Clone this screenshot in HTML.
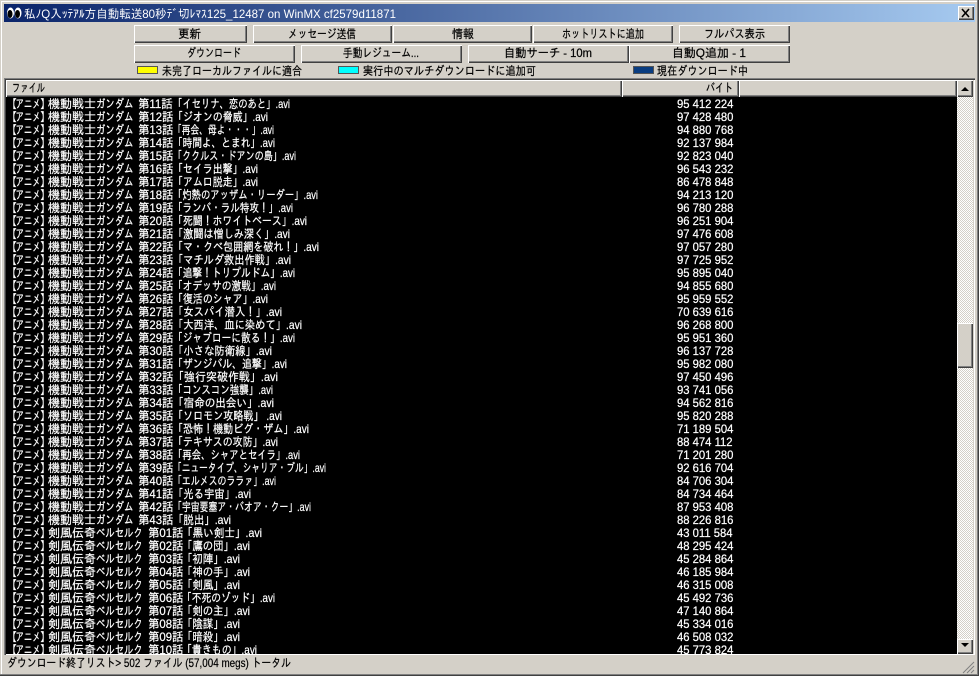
<!DOCTYPE html>
<html><head><meta charset="utf-8"><style>
html,body{margin:0;padding:0}
body{width:979px;height:676px;overflow:hidden;background:#d4d0c8;position:relative;font:12px "Liberation Sans","IPAGothic",sans-serif;color:#000}
div{position:absolute;box-sizing:border-box}
.b{background:#d4d0c8;box-shadow:inset 1px 1px 0 #fff,inset -1px -1px 0 #404040,inset -2px -2px 0 #808080}
.l{width:21px;height:8px;border:1px solid #555;top:66px}
.c{background-image:conic-gradient(#fff 25%,#d4d0c8 0 50%,#fff 0 75%,#d4d0c8 0);background-size:2px 2px}
svg{position:absolute;left:0;top:0}
svg text{font-family:"Liberation Sans","IPAGothic","Noto Sans CJK JP",sans-serif;font-size:12px;fill:#fff;stroke:#fff;stroke-width:.22;white-space:pre}
svg text.d{fill:#000;stroke:#000}
svg text.w{stroke-width:0}
.a{transform:translate(5px,0)}
.e{transform:translate(15.5px,0) scaleX(.7)}
.f{transform:translate(40px,0)}
.k{transform:translate(48px,0)}
.g{transform:translate(96px,0) scaleX(.78)}
.n{transform:translate(138px,0) scaleX(.95)}
.m{transform:translate(148px,0) scaleX(.95)}
.s{transform:translate(677px,0) scaleX(.94)}
</style></head><body>
<div style="left:0;top:0;width:979px;height:676px;box-shadow:inset -1px -1px 0 #404040,inset -2px -2px 0 #808080,inset 1px 1px 0 #d4d0c8,inset 2px 2px 0 #fff"></div>
<div style="left:4px;top:4px;width:971px;height:18px;background:linear-gradient(90deg,#0a246a,#a6caf0)"></div>
<div class="b" style="left:958px;top:6px;width:16px;height:14px"></div>

<div class="b" style="left:134px;top:25px;width:113px;height:18px"></div>
<div class="b" style="left:253px;top:25px;width:139px;height:18px"></div>
<div class="b" style="left:393px;top:25px;width:139px;height:18px"></div>
<div class="b" style="left:533px;top:25px;width:140px;height:18px"></div>
<div class="b" style="left:679px;top:25px;width:111px;height:18px"></div>
<div class="b" style="left:134px;top:45px;width:161px;height:18px"></div>
<div class="b" style="left:301px;top:45px;width:161px;height:18px"></div>
<div class="b" style="left:468px;top:45px;width:161px;height:18px"></div>
<div class="b" style="left:629px;top:45px;width:161px;height:18px"></div>

<div class="l" style="left:137px;background:#ffff00"></div>
<div class="l" style="left:338px;background:#00ffff"></div>
<div class="l" style="left:633px;background:#0a3d80"></div>

<div style="left:4px;top:78px;width:971px;height:577px;box-shadow:inset 1px 1px 0 #808080,inset 2px 2px 0 #404040,inset -1px -1px 0 #fff"></div>
<div class="b" style="left:6px;top:80px;width:616px;height:17px"></div>
<div class="b" style="left:622px;top:80px;width:117px;height:17px"></div>
<div class="b" style="left:739px;top:80px;width:218px;height:17px"></div>
<div style="left:6px;top:97px;width:951px;height:557px;background:#000"></div>
<div class="c" style="left:957px;top:97px;width:16px;height:557px"></div>
<div class="b" style="left:957px;top:80px;width:16px;height:17px"></div>
<div class="b" style="left:957px;top:323px;width:16px;height:45px"></div>
<div class="b" style="left:957px;top:639px;width:16px;height:15px"></div>

<svg width="979" height="676" viewBox="0 0 979 676">
<ellipse cx="10.5" cy="13" rx="3.5" ry="5.5" fill="#fff"/><ellipse cx="10" cy="14" rx="2.5" ry="4" fill="#000"/>
<ellipse cx="18" cy="13" rx="3.5" ry="5.5" fill="#fff"/><ellipse cx="17.5" cy="14" rx="2.5" ry="4" fill="#000"/>
<path d="M962 9l7 8M969 9l-7 8" stroke="#000" stroke-width="1.6" fill="none"/>
<path d="M961 91h8l-4-4z M961 643h8l-4 4z" fill="#000"/>
<path d="M963 673l11-11M967 673l7-7M971 673l3-3" stroke="#808080" stroke-width="1" fill="none"/>
<text class="w" x="24" y="18" textLength="372" lengthAdjust="spacingAndGlyphs">私ﾉQ入ｯﾃｱﾙ方自動転送80秒ﾃﾞ切ﾚﾏｽ125_12487 on WinMX cf2579d11871</text>
<text class="d" x="178" y="38" textLength="23" lengthAdjust="spacingAndGlyphs">更新</text>
<text class="d" x="288" y="38" textLength="68" lengthAdjust="spacingAndGlyphs">メッセージ送信</text>
<text class="d" x="452" y="38" textLength="22" lengthAdjust="spacingAndGlyphs">情報</text>
<text class="d" x="562" y="38" textLength="82" lengthAdjust="spacingAndGlyphs">ホットリストに追加</text>
<text class="d" x="704" y="38" textLength="61" lengthAdjust="spacingAndGlyphs">フルパス表示</text>
<text class="d" x="187" y="57" textLength="54" lengthAdjust="spacingAndGlyphs">ダウンロード</text>
<text class="d" x="343" y="57" textLength="76" lengthAdjust="spacingAndGlyphs">手動レジューム...</text>
<text class="d" x="504" y="57" textLength="88" lengthAdjust="spacingAndGlyphs">自動サーチ - 10m</text>
<text class="d" x="672" y="57" textLength="74" lengthAdjust="spacingAndGlyphs">自動Q追加 - 1</text>
<text class="d" x="162" y="75" textLength="140" lengthAdjust="spacingAndGlyphs">未完了ローカルファイルに適合</text>
<text class="d" x="363" y="75" textLength="173" lengthAdjust="spacingAndGlyphs">実行中のマルチダウンロードに追加可</text>
<text class="d" x="657" y="75" textLength="91" lengthAdjust="spacingAndGlyphs">現在ダウンロード中</text>
<text class="d" x="12" y="92" textLength="33" lengthAdjust="spacingAndGlyphs">ファイル</text>
<text class="d" x="706" y="92" textLength="27" lengthAdjust="spacingAndGlyphs">バイト</text>
<text class="d" x="7" y="667" textLength="284" lengthAdjust="spacingAndGlyphs">ダウンロード終了リスト&gt; 502 ファイル (57,004 megs) トータル</text>
</svg>

<svg width="979" height="654" viewBox="0 0 979 654">
<text class="a" y="108">【</text><text class="e" y="108">アニメ</text><text class="f" y="108">】</text><text class="k" y="108">機動戦士</text><text class="g" y="108">ガンダム</text><text class="n" y="108">第11話</text><text x="173" y="108" textLength="117" lengthAdjust="spacingAndGlyphs">「イセリナ、恋のあと」.avi</text><text class="s" y="108">95 412 224</text>
<text class="a" y="121">【</text><text class="e" y="121">アニメ</text><text class="f" y="121">】</text><text class="k" y="121">機動戦士</text><text class="g" y="121">ガンダム</text><text class="n" y="121">第12話</text><text x="173" y="121" textLength="95" lengthAdjust="spacingAndGlyphs">「ジオンの脅威」.avi</text><text class="s" y="121">97 428 480</text>
<text class="a" y="134">【</text><text class="e" y="134">アニメ</text><text class="f" y="134">】</text><text class="k" y="134">機動戦士</text><text class="g" y="134">ガンダム</text><text class="n" y="134">第13話</text><text x="173" y="134" textLength="101" lengthAdjust="spacingAndGlyphs">「再会、母よ・・・」.avi</text><text class="s" y="134">94 880 768</text>
<text class="a" y="147">【</text><text class="e" y="147">アニメ</text><text class="f" y="147">】</text><text class="k" y="147">機動戦士</text><text class="g" y="147">ガンダム</text><text class="n" y="147">第14話</text><text x="173" y="147" textLength="102" lengthAdjust="spacingAndGlyphs">「時間よ、とまれ」.avi</text><text class="s" y="147">92 137 984</text>
<text class="a" y="160">【</text><text class="e" y="160">アニメ</text><text class="f" y="160">】</text><text class="k" y="160">機動戦士</text><text class="g" y="160">ガンダム</text><text class="n" y="160">第15話</text><text x="173" y="160" textLength="123" lengthAdjust="spacingAndGlyphs">「ククルス・ドアンの島」.avi</text><text class="s" y="160">92 823 040</text>
<text class="a" y="173">【</text><text class="e" y="173">アニメ</text><text class="f" y="173">】</text><text class="k" y="173">機動戦士</text><text class="g" y="173">ガンダム</text><text class="n" y="173">第16話</text><text x="173" y="173" textLength="85" lengthAdjust="spacingAndGlyphs">「セイラ出撃」.avi</text><text class="s" y="173">96 543 232</text>
<text class="a" y="186">【</text><text class="e" y="186">アニメ</text><text class="f" y="186">】</text><text class="k" y="186">機動戦士</text><text class="g" y="186">ガンダム</text><text class="n" y="186">第17話</text><text x="173" y="186" textLength="85" lengthAdjust="spacingAndGlyphs">「アムロ脱走」.avi</text><text class="s" y="186">86 478 848</text>
<text class="a" y="199">【</text><text class="e" y="199">アニメ</text><text class="f" y="199">】</text><text class="k" y="199">機動戦士</text><text class="g" y="199">ガンダム</text><text class="n" y="199">第18話</text><text x="173" y="199" textLength="145" lengthAdjust="spacingAndGlyphs">「灼熱のアッザム・リーダー」.avi</text><text class="s" y="199">94 213 120</text>
<text class="a" y="212">【</text><text class="e" y="212">アニメ</text><text class="f" y="212">】</text><text class="k" y="212">機動戦士</text><text class="g" y="212">ガンダム</text><text class="n" y="212">第19話</text><text x="173" y="212" textLength="120" lengthAdjust="spacingAndGlyphs">「ランバ・ラル特攻！」.avi</text><text class="s" y="212">96 780 288</text>
<text class="a" y="225">【</text><text class="e" y="225">アニメ</text><text class="f" y="225">】</text><text class="k" y="225">機動戦士</text><text class="g" y="225">ガンダム</text><text class="n" y="225">第20話</text><text x="173" y="225" textLength="134" lengthAdjust="spacingAndGlyphs">「死闘！ホワイトベース」.avi</text><text class="s" y="225">96 251 904</text>
<text class="a" y="238">【</text><text class="e" y="238">アニメ</text><text class="f" y="238">】</text><text class="k" y="238">機動戦士</text><text class="g" y="238">ガンダム</text><text class="n" y="238">第21話</text><text x="173" y="238" textLength="117" lengthAdjust="spacingAndGlyphs">「激闘は憎しみ深く」.avi</text><text class="s" y="238">97 476 608</text>
<text class="a" y="251">【</text><text class="e" y="251">アニメ</text><text class="f" y="251">】</text><text class="k" y="251">機動戦士</text><text class="g" y="251">ガンダム</text><text class="n" y="251">第22話</text><text x="173" y="251" textLength="146" lengthAdjust="spacingAndGlyphs">「マ・クベ包囲網を破れ！」.avi</text><text class="s" y="251">97 057 280</text>
<text class="a" y="264">【</text><text class="e" y="264">アニメ</text><text class="f" y="264">】</text><text class="k" y="264">機動戦士</text><text class="g" y="264">ガンダム</text><text class="n" y="264">第23話</text><text x="173" y="264" textLength="118" lengthAdjust="spacingAndGlyphs">「マチルダ救出作戦」.avi</text><text class="s" y="264">97 725 952</text>
<text class="a" y="277">【</text><text class="e" y="277">アニメ</text><text class="f" y="277">】</text><text class="k" y="277">機動戦士</text><text class="g" y="277">ガンダム</text><text class="n" y="277">第24話</text><text x="173" y="277" textLength="122" lengthAdjust="spacingAndGlyphs">「追撃！トリプルドム」.avi</text><text class="s" y="277">95 895 040</text>
<text class="a" y="290">【</text><text class="e" y="290">アニメ</text><text class="f" y="290">】</text><text class="k" y="290">機動戦士</text><text class="g" y="290">ガンダム</text><text class="n" y="290">第25話</text><text x="173" y="290" textLength="103" lengthAdjust="spacingAndGlyphs">「オデッサの激戦」.avi</text><text class="s" y="290">94 855 680</text>
<text class="a" y="303">【</text><text class="e" y="303">アニメ</text><text class="f" y="303">】</text><text class="k" y="303">機動戦士</text><text class="g" y="303">ガンダム</text><text class="n" y="303">第26話</text><text x="173" y="303" textLength="95" lengthAdjust="spacingAndGlyphs">「復活のシャア」.avi</text><text class="s" y="303">95 959 552</text>
<text class="a" y="316">【</text><text class="e" y="316">アニメ</text><text class="f" y="316">】</text><text class="k" y="316">機動戦士</text><text class="g" y="316">ガンダム</text><text class="n" y="316">第27話</text><text x="173" y="316" textLength="109" lengthAdjust="spacingAndGlyphs">「女スパイ潜入！」.avi</text><text class="s" y="316">70 639 616</text>
<text class="a" y="329">【</text><text class="e" y="329">アニメ</text><text class="f" y="329">】</text><text class="k" y="329">機動戦士</text><text class="g" y="329">ガンダム</text><text class="n" y="329">第28話</text><text x="173" y="329" textLength="129" lengthAdjust="spacingAndGlyphs">「大西洋、血に染めて」.avi</text><text class="s" y="329">96 268 800</text>
<text class="a" y="342">【</text><text class="e" y="342">アニメ</text><text class="f" y="342">】</text><text class="k" y="342">機動戦士</text><text class="g" y="342">ガンダム</text><text class="n" y="342">第29話</text><text x="173" y="342" textLength="122" lengthAdjust="spacingAndGlyphs">「ジャブローに散る！」.avi</text><text class="s" y="342">95 951 360</text>
<text class="a" y="355">【</text><text class="e" y="355">アニメ</text><text class="f" y="355">】</text><text class="k" y="355">機動戦士</text><text class="g" y="355">ガンダム</text><text class="n" y="355">第30話</text><text x="173" y="355" textLength="99" lengthAdjust="spacingAndGlyphs">「小さな防衛線」.avi</text><text class="s" y="355">96 137 728</text>
<text class="a" y="368">【</text><text class="e" y="368">アニメ</text><text class="f" y="368">】</text><text class="k" y="368">機動戦士</text><text class="g" y="368">ガンダム</text><text class="n" y="368">第31話</text><text x="173" y="368" textLength="114" lengthAdjust="spacingAndGlyphs">「ザンジバル、追撃」.avi</text><text class="s" y="368">95 982 080</text>
<text class="a" y="381">【</text><text class="e" y="381">アニメ</text><text class="f" y="381">】</text><text class="k" y="381">機動戦士</text><text class="g" y="381">ガンダム</text><text class="n" y="381">第32話</text><text x="173" y="381" textLength="105" lengthAdjust="spacingAndGlyphs">「強行突破作戦」.avi</text><text class="s" y="381">97 450 496</text>
<text class="a" y="394">【</text><text class="e" y="394">アニメ</text><text class="f" y="394">】</text><text class="k" y="394">機動戦士</text><text class="g" y="394">ガンダム</text><text class="n" y="394">第33話</text><text x="173" y="394" textLength="100" lengthAdjust="spacingAndGlyphs">「コンスコン強襲」.avi</text><text class="s" y="394">93 741 056</text>
<text class="a" y="407">【</text><text class="e" y="407">アニメ</text><text class="f" y="407">】</text><text class="k" y="407">機動戦士</text><text class="g" y="407">ガンダム</text><text class="n" y="407">第34話</text><text x="173" y="407" textLength="101" lengthAdjust="spacingAndGlyphs">「宿命の出会い」.avi</text><text class="s" y="407">94 562 816</text>
<text class="a" y="420">【</text><text class="e" y="420">アニメ</text><text class="f" y="420">】</text><text class="k" y="420">機動戦士</text><text class="g" y="420">ガンダム</text><text class="n" y="420">第35話</text><text x="173" y="420" textLength="109" lengthAdjust="spacingAndGlyphs">「ソロモン攻略戦」 .avi</text><text class="s" y="420">95 820 288</text>
<text class="a" y="433">【</text><text class="e" y="433">アニメ</text><text class="f" y="433">】</text><text class="k" y="433">機動戦士</text><text class="g" y="433">ガンダム</text><text class="n" y="433">第36話</text><text x="173" y="433" textLength="136" lengthAdjust="spacingAndGlyphs">「恐怖！機動ビグ・ザム」.avi</text><text class="s" y="433">71 189 504</text>
<text class="a" y="446">【</text><text class="e" y="446">アニメ</text><text class="f" y="446">】</text><text class="k" y="446">機動戦士</text><text class="g" y="446">ガンダム</text><text class="n" y="446">第37話</text><text x="173" y="446" textLength="105" lengthAdjust="spacingAndGlyphs">「テキサスの攻防」.avi</text><text class="s" y="446">88 474 112</text>
<text class="a" y="459">【</text><text class="e" y="459">アニメ</text><text class="f" y="459">】</text><text class="k" y="459">機動戦士</text><text class="g" y="459">ガンダム</text><text class="n" y="459">第38話</text><text x="173" y="459" textLength="127" lengthAdjust="spacingAndGlyphs">「再会、シャアとセイラ」.avi</text><text class="s" y="459">71 201 280</text>
<text class="a" y="472">【</text><text class="e" y="472">アニメ</text><text class="f" y="472">】</text><text class="k" y="472">機動戦士</text><text class="g" y="472">ガンダム</text><text class="n" y="472">第39話</text><text x="173" y="472" textLength="153" lengthAdjust="spacingAndGlyphs">「ニュータイプ、シャリア・ブル」.avi</text><text class="s" y="472">92 616 704</text>
<text class="a" y="485">【</text><text class="e" y="485">アニメ</text><text class="f" y="485">】</text><text class="k" y="485">機動戦士</text><text class="g" y="485">ガンダム</text><text class="n" y="485">第40話</text><text x="173" y="485" textLength="103" lengthAdjust="spacingAndGlyphs">「エルメスのララァ」.avi</text><text class="s" y="485">84 706 304</text>
<text class="a" y="498">【</text><text class="e" y="498">アニメ</text><text class="f" y="498">】</text><text class="k" y="498">機動戦士</text><text class="g" y="498">ガンダム</text><text class="n" y="498">第41話</text><text x="173" y="498" textLength="78" lengthAdjust="spacingAndGlyphs">「光る宇宙」.avi</text><text class="s" y="498">84 734 464</text>
<text class="a" y="511">【</text><text class="e" y="511">アニメ</text><text class="f" y="511">】</text><text class="k" y="511">機動戦士</text><text class="g" y="511">ガンダム</text><text class="n" y="511">第42話</text><text x="173" y="511" textLength="138" lengthAdjust="spacingAndGlyphs">「宇宙要塞ア・バオア・クー」.avi</text><text class="s" y="511">87 953 408</text>
<text class="a" y="524">【</text><text class="e" y="524">アニメ</text><text class="f" y="524">】</text><text class="k" y="524">機動戦士</text><text class="g" y="524">ガンダム</text><text class="n" y="524">第43話</text><text x="173" y="524" textLength="58" lengthAdjust="spacingAndGlyphs">「脱出」.avi</text><text class="s" y="524">88 226 816</text>
<text class="a" y="537">【</text><text class="e" y="537">アニメ</text><text class="f" y="537">】</text><text class="k" y="537">剣風伝奇</text><text class="g" y="537">ベルセルク</text><text class="m" y="537">第01話</text><text x="182" y="537" textLength="80" lengthAdjust="spacingAndGlyphs">「黒い剣士」.avi</text><text class="s" y="537">43 011 584</text>
<text class="a" y="550">【</text><text class="e" y="550">アニメ</text><text class="f" y="550">】</text><text class="k" y="550">剣風伝奇</text><text class="g" y="550">ベルセルク</text><text class="m" y="550">第02話</text><text x="182" y="550" textLength="68" lengthAdjust="spacingAndGlyphs">「鷹の団」.avi</text><text class="s" y="550">48 295 424</text>
<text class="a" y="563">【</text><text class="e" y="563">アニメ</text><text class="f" y="563">】</text><text class="k" y="563">剣風伝奇</text><text class="g" y="563">ベルセルク</text><text class="m" y="563">第03話</text><text x="182" y="563" textLength="58" lengthAdjust="spacingAndGlyphs">「初陣」.avi</text><text class="s" y="563">45 284 864</text>
<text class="a" y="576">【</text><text class="e" y="576">アニメ</text><text class="f" y="576">】</text><text class="k" y="576">剣風伝奇</text><text class="g" y="576">ベルセルク</text><text class="m" y="576">第04話</text><text x="182" y="576" textLength="68" lengthAdjust="spacingAndGlyphs">「神の手」.avi</text><text class="s" y="576">46 185 984</text>
<text class="a" y="589">【</text><text class="e" y="589">アニメ</text><text class="f" y="589">】</text><text class="k" y="589">剣風伝奇</text><text class="g" y="589">ベルセルク</text><text class="m" y="589">第05話</text><text x="182" y="589" textLength="58" lengthAdjust="spacingAndGlyphs">「剣風」.avi</text><text class="s" y="589">46 315 008</text>
<text class="a" y="602">【</text><text class="e" y="602">アニメ</text><text class="f" y="602">】</text><text class="k" y="602">剣風伝奇</text><text class="g" y="602">ベルセルク</text><text class="m" y="602">第06話</text><text x="182" y="602" textLength="93" lengthAdjust="spacingAndGlyphs">「不死のゾッド」.avi</text><text class="s" y="602">45 492 736</text>
<text class="a" y="615">【</text><text class="e" y="615">アニメ</text><text class="f" y="615">】</text><text class="k" y="615">剣風伝奇</text><text class="g" y="615">ベルセルク</text><text class="m" y="615">第07話</text><text x="182" y="615" textLength="68" lengthAdjust="spacingAndGlyphs">「剣の主」.avi</text><text class="s" y="615">47 140 864</text>
<text class="a" y="628">【</text><text class="e" y="628">アニメ</text><text class="f" y="628">】</text><text class="k" y="628">剣風伝奇</text><text class="g" y="628">ベルセルク</text><text class="m" y="628">第08話</text><text x="182" y="628" textLength="58" lengthAdjust="spacingAndGlyphs">「陰謀」.avi</text><text class="s" y="628">45 334 016</text>
<text class="a" y="641">【</text><text class="e" y="641">アニメ</text><text class="f" y="641">】</text><text class="k" y="641">剣風伝奇</text><text class="g" y="641">ベルセルク</text><text class="m" y="641">第09話</text><text x="182" y="641" textLength="58" lengthAdjust="spacingAndGlyphs">「暗殺」.avi</text><text class="s" y="641">46 508 032</text>
<text class="a" y="654">【</text><text class="e" y="654">アニメ</text><text class="f" y="654">】</text><text class="k" y="654">剣風伝奇</text><text class="g" y="654">ベルセルク</text><text class="m" y="654">第10話</text><text x="182" y="654" textLength="75" lengthAdjust="spacingAndGlyphs">「貴きもの」.avi</text><text class="s" y="654">45 773 824</text>
</svg>
</body></html>
